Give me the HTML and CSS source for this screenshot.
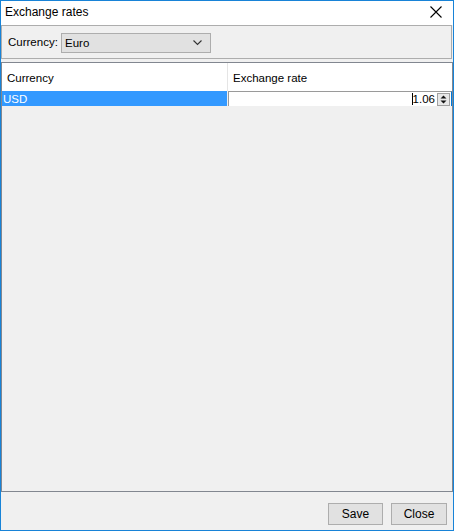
FILE: index.html
```html
<!DOCTYPE html>
<html>
<head>
<meta charset="utf-8">
<link rel="stylesheet" href="styles.css">
</head>
<body>
<div class="window">
  <div class="titlebar">
    <span class="title">Exchange rates</span>
    <svg class="close" width="12" height="12" viewBox="0 0 12 12"><path d="M0.5 0.5 L11.5 11.5 M11.5 0.5 L0.5 11.5" stroke="#000" stroke-width="1.1" fill="none"/></svg>
  </div>
  <div class="panel">
    <span class="label">Currency:</span>
    <div class="combo">
      <span>Euro</span>
      <svg width="9" height="6" viewBox="0 0 9 6"><path d="M0.5 0.5 L4.5 4.5 L8.5 0.5" stroke="#333" stroke-width="1.1" fill="none"/></svg>
    </div>
  </div>
  <div class="table">
    <div class="header">
      <div class="hcell c1">Currency</div>
      <div class="hcell c2">Exchange rate</div>
    </div>
    <div class="row">
      <div class="cell c1 selected">USD</div>
      <div class="cell c2 editor">
        <span class="value"><span class="caret"></span>1.06</span>
        <div class="spin">
          <svg width="13" height="13" viewBox="0 0 13 13"><rect x="0.5" y="0.5" width="12" height="12" fill="#e8e8e8" stroke="#a0a0a0"/><path d="M3.5 5.5 L6.5 2.5 L9.5 5.5 Z M3.5 7.5 L6.5 10.5 L9.5 7.5 Z" fill="#111"/></svg>
        </div>
      </div>
    </div>
  </div>
  <div class="footer">
    <button class="btn save">Save</button>
    <button class="btn">Close</button>
  </div>
</div>
</body>
</html>
```
FILE: styles.css
```css
html, body {
  margin: 0;
  padding: 0;
  background: #ffffff;
}
body {
  font-family: "Liberation Sans", Arial, sans-serif;
  font-size: 12px;
  color: #000;
}
.window {
  box-sizing: border-box;
  width: 454px;
  height: 531px;
  border: 1px solid #1883d7;
  background: #f0f0f0;
  display: flex;
  flex-direction: column;
}
.titlebar {
  height: 24px;
  background: #fff;
  display: flex;
  align-items: center;
  justify-content: space-between;
  padding: 0 11px 0 4px;
  flex-shrink: 0;
}
.title {
  font-size: 12px;
  margin-top: -2px;
}
.close {
  margin-top: -2px;
}
.panel {
  box-sizing: border-box;
  height: 34px;
  margin-right: 1px;
  border: 1px solid #adadad;
  background: #f0f0f0;
  display: flex;
  align-items: center;
  padding-left: 6px;
  flex-shrink: 0;
  font-size: 11.5px;
}
.label {
  width: 53px;
}
.combo {
  box-sizing: border-box;
  width: 150px;
  height: 20px;
  border: 1px solid #adadad;
  background: #e1e1e1;
  display: flex;
  align-items: center;
  justify-content: space-between;
  padding: 0 8px 0 3px;
  margin-top: 1px;
}
.table {
  margin-top: 3px;
  box-sizing: border-box;
  height: 430px;
  border: 1px solid #828790;
  background: #f0f0f0;
  flex-shrink: 0;
  font-size: 11.5px;
}
.header {
  display: flex;
  height: 28px;
  background: #fff;
}
.hcell {
  box-sizing: border-box;
  display: flex;
  align-items: center;
  padding-left: 5px;
  padding-top: 2px;
}
.c1 {
  width: 226px;
  border-right: 1px solid #e5e5e5;
}
.c2 {
  flex: 1;
}
.row {
  display: flex;
  height: 15px;
  background: #fff;
}
.cell {
  box-sizing: border-box;
  display: flex;
  align-items: center;
}
.selected {
  background: #3399ff;
  color: #fff;
  padding-left: 1px;
  border-right: 1px solid #f0f0f0;
}
.editor {
  border: 1px solid #9a9a9a;
  border-right: 1px solid #0078d7;
  border-bottom: none;
  background: #fff;
  justify-content: flex-end;
  padding-right: 1px;
}
.value {
  display: flex;
  align-items: center;
  margin-right: 2px;
}
.caret {
  display: inline-block;
  width: 1px;
  height: 12px;
  background: #000;
}
.spin {
  width: 13px;
  height: 13px;
  display: flex;
}
.footer {
  flex: 1;
  display: flex;
  justify-content: flex-end;
  align-items: flex-start;
  padding: 11px 6px 0 0;
  gap: 8px;
}
.btn {
  box-sizing: border-box;
  width: 56px;
  height: 22px;
  border: 1px solid #adadad;
  background: #e1e1e1;
  font-family: "Liberation Sans", Arial, sans-serif;
  font-size: 12px;
  color: #000;
  padding: 0;
}
.save {
  width: 55px;
}
```
